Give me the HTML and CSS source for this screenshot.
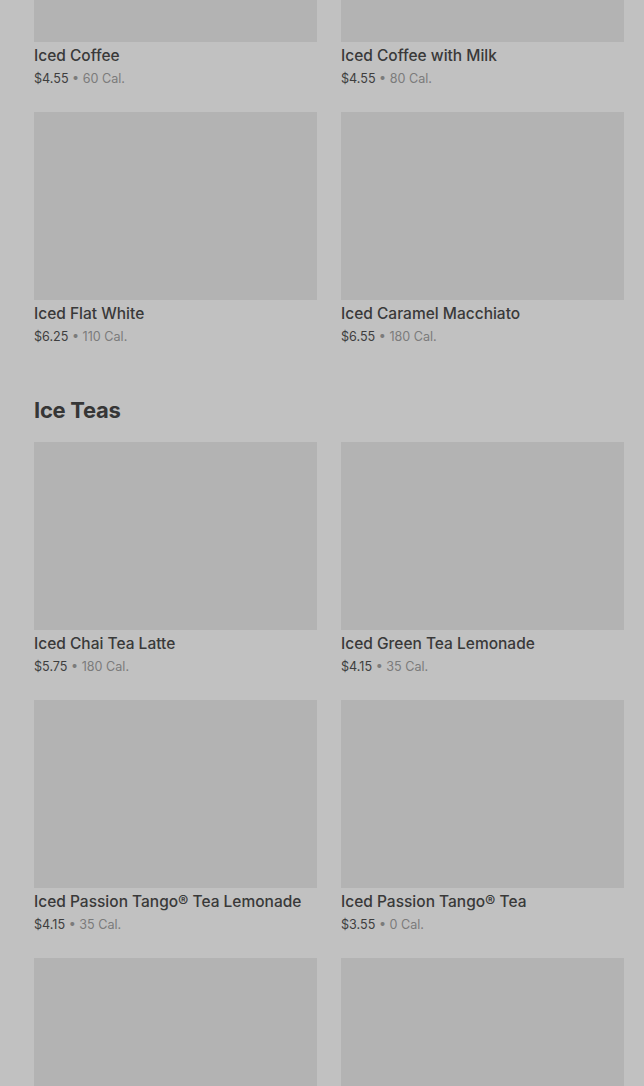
FILE: index.html
```html
<!DOCTYPE html>
<html lang="en">
<head>
<meta charset="utf-8">
<title>Menu</title>
<link rel="stylesheet" href="styles.css">
</head>
<body>
<main class="menu">
  <section class="section first">
    <div class="grid">
      <article class="card"><div class="thumb"></div><h3 class="name">Iced Coffee</h3><p class="meta"><span class="price">$4.55</span> • 60 Cal.</p></article>
      <article class="card"><div class="thumb"></div><h3 class="name">Iced Coffee with Milk</h3><p class="meta"><span class="price">$4.55</span> • 80 Cal.</p></article>
      <article class="card"><div class="thumb"></div><h3 class="name">Iced Flat White</h3><p class="meta"><span class="price">$6.25</span> • 110 Cal.</p></article>
      <article class="card"><div class="thumb"></div><h3 class="name">Iced Caramel Macchiato</h3><p class="meta"><span class="price">$6.55</span> • 180 Cal.</p></article>
    </div>
  </section>
  <section class="section">
    <h2 class="section-title">Ice Teas</h2>
    <div class="grid">
      <article class="card"><div class="thumb"></div><h3 class="name">Iced Chai Tea Latte</h3><p class="meta"><span class="price">$5.75</span> • 180 Cal.</p></article>
      <article class="card"><div class="thumb"></div><h3 class="name">Iced Green Tea Lemonade</h3><p class="meta"><span class="price">$4.15</span> • 35 Cal.</p></article>
      <article class="card"><div class="thumb"></div><h3 class="name">Iced Passion Tango® Tea Lemonade</h3><p class="meta"><span class="price">$4.15</span> • 35 Cal.</p></article>
      <article class="card"><div class="thumb"></div><h3 class="name">Iced Passion Tango® Tea</h3><p class="meta"><span class="price">$3.55</span> • 0 Cal.</p></article>
      <article class="card"><div class="thumb"></div></article>
      <article class="card"><div class="thumb"></div></article>
    </div>
  </section>
</main>
</body>
</html>
```
FILE: styles.css
```css
html, body {
  margin: 0;
  padding: 0;
  background: #c1c1c1;
  overflow: hidden;
}
body {
  font-family: Inter, "Liberation Sans", sans-serif;
  color: #393939;
}
.menu {
  padding: 0 20px 0 34px;
  margin-top: -146px;
}
.section + .section {
  margin-top: 49px;
}
.section-title {
  margin: 0 0 18px;
  font-size: 22px;
  line-height: 28px;
  font-weight: 700;
  letter-spacing: -0.3px;
  color: #363636;
}
.grid {
  display: grid;
  grid-template-columns: 283px 283px;
  column-gap: 24px;
  row-gap: 23px;
}
.card {
  display: flex;
  flex-direction: column;
}
.thumb {
  height: 188px;
  background: #b3b3b3;
}
.name {
  margin: 0;
  padding-top: 1px;
  font-size: 15.5px;
  line-height: 26px;
  font-weight: 500;
  color: #393939;
}
.meta {
  margin: 0;
  font-size: 12.6px;
  line-height: 20px;
  color: #7b7b7b;
}
.price {
  color: #3e3e3e;
}
```
